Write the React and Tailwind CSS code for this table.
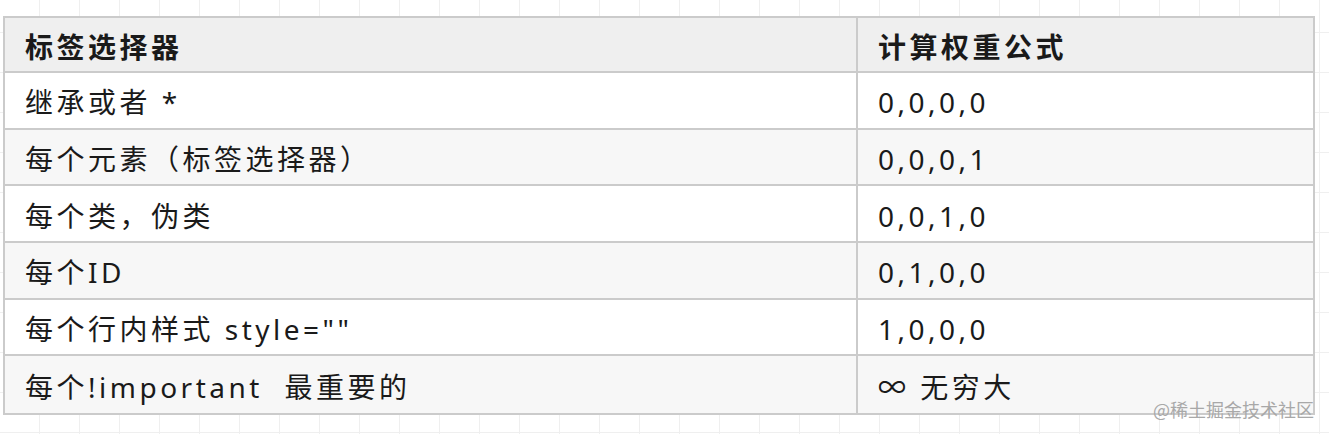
import React from "react";

const rows = [
  ["继承或者 *", "0,0,0,0"],
  ["每个元素（标签选择器）", "0,0,0,1"],
  ["每个类，伪类", "0,0,1,0"],
  ["每个ID", "0,1,0,0"],
  ["每个行内样式 style=\"\"", "1,0,0,0"],
  ["每个!important  最重要的", "∞ 无穷大"],
];

export default function App() {
  return (
    <div
      className="relative w-[1329px] h-[434px] overflow-hidden bg-white bg-[linear-gradient(to_right,#efefef_1px,transparent_1px),linear-gradient(to_bottom,#efefef_1px,transparent_1px)] bg-[size:40px_40px] bg-[position:39px_32px] pt-[16px] pl-[3px]"
      style={{ fontFamily: '"Noto Sans", "Noto Sans CJK SC", sans-serif' }}
    >
      <div className="w-[1312px] border-2 border-[#cbcbcb] flex flex-col divide-y-2 divide-[#cbcbcb] text-[28px] tracking-[3.5px] text-[#1a1a1a] whitespace-pre">
        <div className="grid grid-cols-[853px_1fr] divide-x-2 divide-[#cbcbcb] h-[55px] bg-[#efefef] font-bold">
          <div className="flex items-center pl-5 pt-1">标签选择器</div>
          <div className="flex items-center pl-5 pt-1">计算权重公式</div>
        </div>
        {rows.map((r, i) => (
          <div
            key={i}
            className={
              "grid grid-cols-[853px_1fr] divide-x-2 divide-[#cbcbcb] h-[56.7px] " +
              (i % 2 === 0 ? "bg-white" : "bg-[#f7f7f7]")
            }
          >
            <div className="flex items-center pl-5 pt-1">{r[0]}</div>
            <div className="flex items-center pl-5 pt-1">{r[1]}</div>
          </div>
        ))}
      </div>
      <div
        className="absolute left-[1153px] top-[399px] text-[18px] leading-[20px] text-[#a8a8a8] whitespace-nowrap"
        style={{ fontFamily: '"Noto Sans CJK SC", sans-serif' }}
      >
        @稀土掘金技术社区
      </div>
    </div>
  );
}
